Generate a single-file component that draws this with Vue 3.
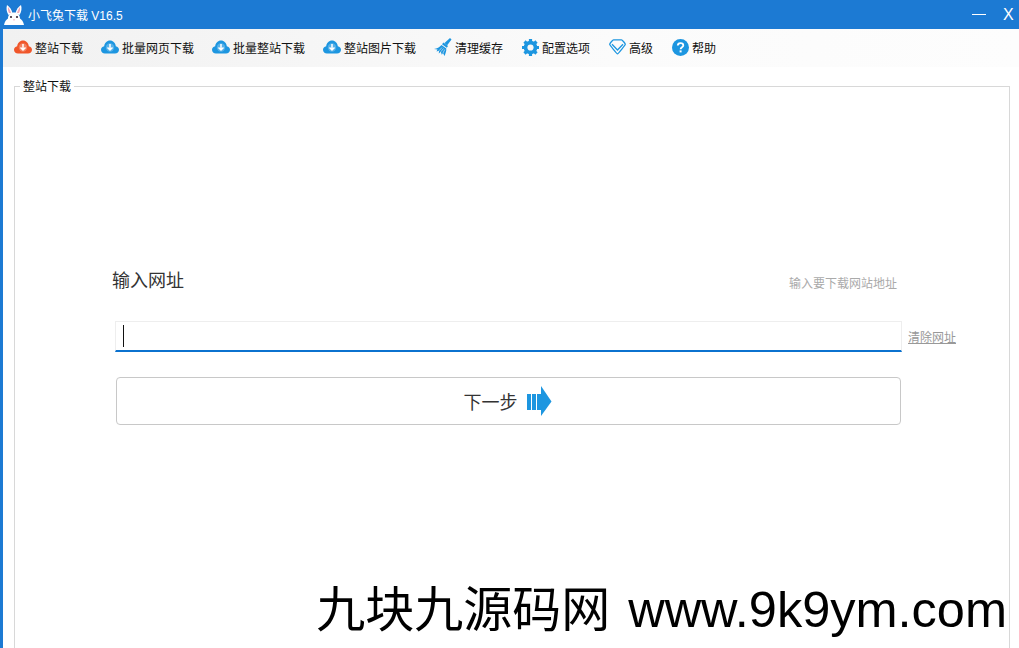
<script setup>
const tools = [
  { label: '整站下载', icon: 'cloud', color: '#f0562a', width: 87 },
  { label: '批量网页下载', icon: 'cloud', color: '#1d96e0', width: 111 },
  { label: '批量整站下载', icon: 'cloud', color: '#1d96e0', width: 111 },
  { label: '整站图片下载', icon: 'cloud', color: '#1d96e0', width: 111 },
  { label: '清理缓存', icon: 'broom', color: '#1d96e0', width: 88 },
  { label: '配置选项', icon: 'gear', color: '#1d96e0', width: 87 },
  { label: '高级', icon: 'diamond', color: '#1d96e0', width: 63 },
  { label: '帮助', icon: 'help', color: '#1d96e0', width: 60 },
];
</script>

<template>
  <div class="app">
    <header class="titlebar">
      <svg class="logo" width="22" height="22" viewBox="0 0 22 22">
        <path d="M5.500 11 C3.500 8 3 4 4 1 C6.500 2.500 8.500 5.500 9.500 9 Z" fill="#fff" />
        <path d="M16.500 11 C18.500 8 19 4 18 1 C15.500 2.500 13.500 5.500 12.500 9 Z" fill="#fff" />
        <path d="M6 9 C5 7 4.800 5 5 3 C6.300 4.500 7.300 6.500 8 9 Z" fill="#f0a8b8" />
        <path d="M16 9 C17 7 17.200 5 17 3 C15.700 4.500 14.700 6.500 14 9 Z" fill="#f0a8b8" />
        <path d="M1 21 C1.500 17.500 3.500 15.500 5 14.500 C5 10.500 8 8.500 11 8.500 C14 8.500 17 10.500 17 14.500 C18.500 15.500 20.500 17.500 21 21 Z" fill="#fff" />
        <circle cx="8" cy="13" r="1.100" fill="#3a2a3a" />
        <circle cx="14" cy="13" r="1.100" fill="#3a2a3a" />
        <path d="M10 15.500 H12 L11 16.800 Z" fill="#ee8fa8" />
      </svg>
      <span class="app-title">小飞兔下载 V16.5</span>
      <div class="window-btns">
        <span class="min-line"></span>
        <span class="close">X</span>
      </div>
    </header>

    <div class="body">
      <nav class="toolbar">
        <a v-for="t in tools" :key="t.label" class="tool" :style="{ width: t.width + 'px' }">
          <svg v-if="t.icon === 'cloud'" width="18" height="14" viewBox="0 0 18 14">
            <path d="M4 13.500 C1.700 13.500 0 12 0 9.800 C0 7.900 1.300 6.500 3.200 6.200 C3.500 3 6 .5 9 .5 C12 .5 14.500 3 14.800 6.200 C16.700 6.500 18 7.900 18 9.800 C18 12 16.300 13.500 14 13.500 Z" :fill="t.color" />
            <circle cx="9" cy="7.500" r="4.200" fill="#fff" fill-opacity=".25" />
            <path d="M9 4 V9.800 M6.500 7.500 L9 10 L11.500 7.500" fill="none" stroke="#fff" stroke-width="1.500" />
          </svg>
          <svg v-else-if="t.icon === 'broom'" width="18" height="18" viewBox="0 0 18 18">
            <path d="M10.500 5 L16 0 L17.500 1.500 L13 7.500 Z" :fill="t.color" />
            <path d="M9.500 4.500 L14 8 L12.800 9.800 L8 6.200 Z" :fill="t.color" />
            <path d="M7.500 7 L12.300 10.500 C12.500 13 11.500 15.800 10.500 18 L9 15 L7.800 16.800 L6.800 13.800 L4.800 15.500 L5 12.800 L2.500 13.500 L3.500 11.500 L0 11 C3 10.500 5.500 9.300 7.500 7 Z" :fill="t.color" />
            <path d="M5 12.800 L8 9.500 M6.800 13.800 L9.500 10.500 M9 15 L10.800 11.500" stroke="#f5f5f5" stroke-width=".6" />
          </svg>
          <svg v-else-if="t.icon === 'gear'" width="17" height="17" viewBox="0 0 17 17">
            <circle cx="8.500" cy="8.500" r="5" fill="none" :stroke="t.color" stroke-width="3.600" />
            <path d="M8.500 0 V17 M0 8.500 H17 M2.500 2.500 L14.500 14.500 M14.500 2.500 L2.500 14.500" :stroke="t.color" stroke-width="3.200" />
            <circle cx="8.500" cy="8.500" r="3.100" fill="#f7f7f7" />
          </svg>
          <svg v-else-if="t.icon === 'diamond'" width="17" height="16" viewBox="0 0 17 16">
            <path d="M4.500 .8 H12.500 C13.200 .8 16.300 4.600 16.300 5.300 C16.300 6 9.200 14.800 8.500 14.800 C7.800 14.800 .7 6 .7 5.300 C.7 4.600 3.800 .8 4.500 .8 Z" fill="none" :stroke="t.color" stroke-width="1.300" />
            <path d="M3 5.300 L8.500 11 L14 5.300" fill="none" :stroke="t.color" stroke-width="1.300" />
          </svg>
          <svg v-else width="17" height="17" viewBox="0 0 17 17">
            <circle cx="8.500" cy="8.500" r="8.500" :fill="t.color" />
            <path d="M5.800 6.600 C5.800 5 7 4.100 8.500 4.100 C10 4.100 11.300 5 11.300 6.400 C11.300 8.300 8.600 8.300 8.600 10.300" fill="none" stroke="#fff" stroke-width="1.800" />
            <rect x="7.600" y="11.400" width="2" height="2" fill="#fff" />
          </svg>
          <span>{{ t.label }}</span>
        </a>
      </nav>

      <main class="content">
        <fieldset class="panel">
          <legend>整站下载</legend>

          <div class="form">
            <div class="form-head">
              <h2>输入网址</h2>
              <span class="hint">输入要下载网站地址</span>
            </div>

            <div class="url-row">
              <div class="url-input"><i class="caret"></i></div>
              <a class="clear">清除网址</a>
            </div>

            <button class="next">
              <span>下一步</span>
              <svg width="25" height="30" viewBox="0 0 25 30">
                <path d="M0 8 H4 V24 H0 Z M5 8 H9 V24 H5 Z M10 8 H14 V24 H10 Z" fill="#1d96e0" />
                <path d="M14 0 L24.500 15.500 L14 30 Z" fill="#1d96e0" />
              </svg>
            </button>
          </div>
        </fieldset>
      </main>
    </div>

    <div class="watermark">
      <span class="wm-cn">九块九源码网</span>
      <span class="wm-url">www.9k9ym.com</span>
    </div>
  </div>
</template>

<style scoped>
.app {
  position: relative;
  width: 1019px;
  height: 648px;
  overflow: hidden;
  background: #fff;
  font-family: "Noto Sans CJK SC", "Liberation Sans", sans-serif;
  color: #222;
}

.titlebar {
  display: flex;
  align-items: center;
  height: 29px;
  padding-left: 3px;
  background: #1c7ad3;
  color: #fff;
}

.logo {
  margin-right: 3px;
}

.app-title {
  font-size: 12px;
  font-family: "Liberation Sans", "Noto Sans CJK SC", sans-serif;
}

.window-btns {
  display: flex;
  align-items: center;
  margin-left: auto;
}

.min-line {
  width: 14px;
  height: 1px;
  margin-right: 17px;
  background: #fff;
}

.close {
  width: 16px;
  font-size: 16px;
  font-family: "Liberation Sans", sans-serif;
}

.body {
  height: 619px;
  border-left: 3px solid #1c7ad3;
}

.toolbar {
  display: flex;
  align-items: center;
  box-sizing: border-box;
  height: 38px;
  padding-left: 11px;
  padding-bottom: 2px;
  background: linear-gradient(90deg, #f1f1f1, #fbfbfb 60%, #fdfdfd);
}

.tool {
  display: flex;
  align-items: center;
  gap: 3px;
  font-size: 12px;
  color: #111;
  white-space: nowrap;
}

.content {
  height: 581px;
  padding: 11px 9px 0 11px;
}

.panel {
  box-sizing: border-box;
  height: 620px;
  margin: 0;
  padding: 0;
  border: 1px solid #d8d8d8;
}

legend {
  margin-left: 5px;
  padding: 0 3px 0 3px;
  font-size: 12px;
  line-height: 16px;
  color: #111;
}

.form {
  width: 846px;
  margin: 167px 0 0 97px;
}

.form-head {
  display: flex;
  align-items: center;
  justify-content: space-between;
  height: 36px;
  padding-right: 4px;
}

.form-head h2 {
  margin: 0;
  font-size: 18px;
  font-weight: 400;
  color: #333;
}

.hint {
  margin-top: 7px;
  margin-right: 57px;
  font-size: 12px;
  color: #aaa;
}

.url-row {
  display: flex;
  align-items: center;
  margin-top: 24px;
  padding-left: 3px;
}

.url-input {
  display: flex;
  align-items: center;
  box-sizing: border-box;
  width: 787px;
  height: 31px;
  padding-left: 7px;
  border: 1px solid #eee;
  border-bottom: 2px solid #0b72cf;
}

.caret {
  width: 1px;
  height: 22px;
  background: #111;
}

.clear {
  margin-left: 6px;
  font-size: 12px;
  color: #999;
  text-decoration: underline;
}

.next {
  display: flex;
  align-items: center;
  justify-content: center;
  gap: 9px;
  box-sizing: border-box;
  width: 785px;
  height: 48px;
  margin: 25px 0 0 4px;
  padding: 0 8px 0 6px;
  background: #fff;
  border: 1px solid #c8c8c8;
  border-radius: 4px;
  font-family: inherit;
  font-size: 18px;
  color: #333;
}

.watermark {
  position: absolute;
  right: 12px;
  bottom: 10px;
  display: flex;
  align-items: baseline;
  gap: 18px;
  color: #000;
  white-space: nowrap;
}

.wm-cn {
  font-size: 49px;
  line-height: 56px;
}

.wm-url {
  font-family: "Liberation Sans", sans-serif;
  font-size: 50.5px;
  line-height: 56px;
}
</style>
